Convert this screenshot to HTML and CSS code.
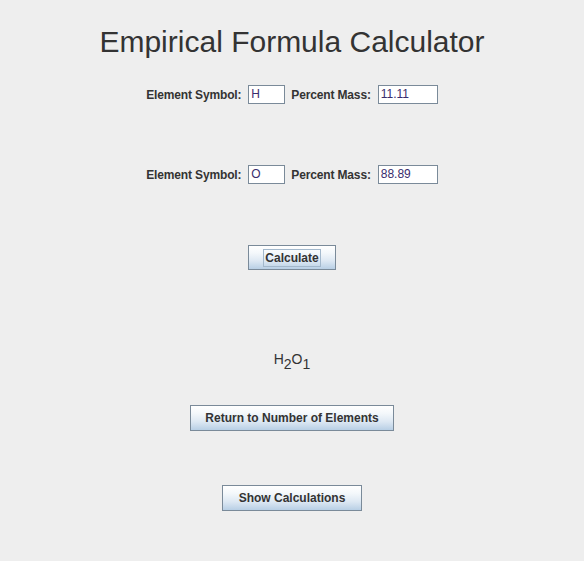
FILE: index.html
```html
<!DOCTYPE html>
<html>
<head>
<meta charset="utf-8">
<link rel="stylesheet" href="styles.css">
</head>
<body>
<div class="app">
  <h1 class="title">Empirical Formula Calculator</h1>
  <div class="row row-first">
    <span class="label">Element Symbol:</span>
    <span class="field field-sym">H</span>
    <span class="label">Percent Mass:</span>
    <span class="field field-mass">11.11</span>
  </div>
  <div class="row row-second">
    <span class="label">Element Symbol:</span>
    <span class="field field-sym">O</span>
    <span class="label">Percent Mass:</span>
    <span class="field field-mass">88.89</span>
  </div>
  <div class="btn-row btn-calc-row">
    <button class="btn btn-calc"><span class="focus">Calculate</span></button>
  </div>
  <div class="formula">H<sub>2</sub>O<sub>1</sub></div>
  <div class="btn-row btn-return-row">
    <button class="btn btn-return">Return to Number of Elements</button>
  </div>
  <div class="btn-row btn-show-row">
    <button class="btn btn-show">Show Calculations</button>
  </div>
</div>
</body>
</html>
```
FILE: styles.css
```css
html, body {
  margin: 0;
  padding: 0;
  background: #eeeeee;
}
body {
  width: 584px;
  height: 561px;
  overflow: hidden;
  font-family: "Liberation Sans", Arial, sans-serif;
  color: #333333;
}
.app {
  display: flex;
  flex-direction: column;
  align-items: center;
}
.title {
  margin: 23px 0 0 0;
  font-size: 30px;
  line-height: 38px;
  font-weight: normal;
  color: #333333;
}
.row {
  display: flex;
  align-items: center;
  height: 19px;
  gap: 6px;
}
.row-first { margin-top: 24px; }
.row-second { margin-top: 61px; }
.label {
  font-size: 12px;
  font-weight: bold;
  letter-spacing: -0.15px;
  color: #333333;
  padding-right: 1px;
}
.field {
  box-sizing: border-box;
  height: 19px;
  border: 1px solid #7a8a99;
  background: #ffffff;
  font-size: 12px;
  line-height: 17px;
  padding-left: 2px;
  color: #3a2d6e;
}
.field-sym { width: 37px; }
.field-mass { width: 60px; }
.btn-row {
  display: flex;
  justify-content: center;
}
.btn {
  box-sizing: border-box;
  height: 26px;
  border: 1px solid #7a8a99;
  background: linear-gradient(#ffffff 0%, #f4f8fb 30%, #dde8f3 65%, #b8cfe5 100%);
  font-family: "Liberation Sans", Arial, sans-serif;
  font-size: 12px;
  font-weight: bold;
  color: #333333;
  padding: 0;
  display: flex;
  align-items: center;
  justify-content: center;
}
.btn-calc-row { margin-top: 61px; }
.btn-calc { width: 88px; height: 25px; }
.focus {
  border: 1px solid #a3b8cc;
  padding: 1px 1px;
  line-height: 14px;
}
.btn-return { width: 204px; }
.btn-show { width: 140px; }
.formula {
  margin-top: 80px;
  height: 18px;
  font-size: 14px;
  line-height: 18px;
  color: #333333;
}
.formula sub {
  font-size: 14px;
  vertical-align: -5px;
  line-height: 0;
}
.btn-return-row { margin-top: 37px; }
.btn-show-row { margin-top: 54px; }
```
